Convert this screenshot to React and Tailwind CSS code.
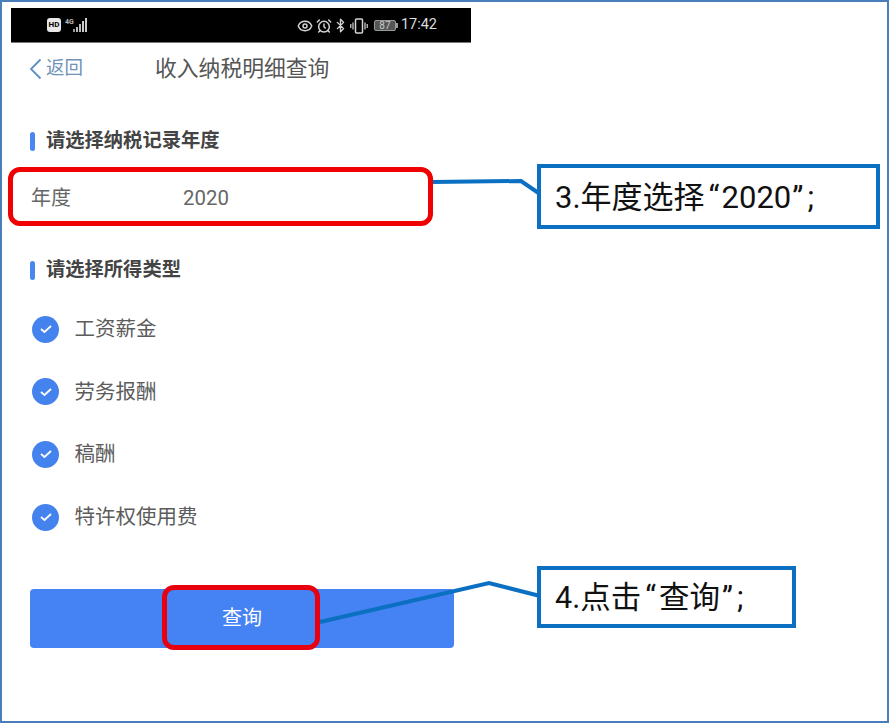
import { AlarmClock, Bluetooth, Eye } from "lucide-react";

const incomeTypes = ["工资薪金", "劳务报酬", "稿酬", "特许权使用费"];

const StatusBar = () => (
  <div className="ml-[9px] mt-[6px] flex h-[35px] w-[460px] items-center justify-between border-b border-[#777] bg-black pl-[36px] pr-[34px]">
    <div className="flex items-center gap-[3px]">
      <span className="flex h-[14px] w-[14px] items-center justify-center rounded-[3px] bg-[#e8e8e8] text-[8px] font-bold leading-none text-black">
        HD
      </span>
      <svg width="24" height="15" viewBox="0 0 24 15">
        <text x="1" y="6" fill="#bbb" fontSize="7" fontWeight="700" fontFamily="Roboto">4G</text>
        <rect x="9" y="11" width="2" height="3" fill="#999" />
        <rect x="12" y="9" width="2" height="5" fill="#bbb" />
        <rect x="15" y="6" width="2" height="8" fill="#bbb" />
        <rect x="18" y="3" width="2" height="11" fill="#ccc" />
        <rect x="21" y="0" width="2" height="14" fill="#ccc" />
      </svg>
    </div>
    <div className="flex items-center pt-[1px] text-[#d4d4d4]">
      <Eye size={16} strokeWidth={2.2} />
      <AlarmClock size={16} strokeWidth={2.2} className="ml-[3px]" />
      <Bluetooth size={15} strokeWidth={2.2} className="ml-[1px]" />
      <svg width="18" height="16" viewBox="0 0 18 16" fill="none" stroke="currentColor" className="ml-[2px]">
        <rect x="5.5" y="1" width="7" height="14" rx="1" strokeWidth="1.5" />
        <path d="M3 4.5 V11.5 M0.8 6 V10 M15 4.5 V11.5 M17.2 6 V10" strokeWidth="1.2" />
      </svg>
      <span className="ml-[6px] flex items-center">
        <span className="flex h-[11px] w-[22px] items-center justify-center rounded-[2px] border border-[#999] bg-[#555] font-['Roboto',sans-serif] text-[10px] leading-none text-[#ccc]">
          87
        </span>
        <span className="h-[5px] w-[2px] bg-[#999]" />
      </span>
      <span className="ml-[3px] font-['Roboto',sans-serif] text-[14.5px] leading-none text-[#ddd]">17:42</span>
    </div>
  </div>
);

const NavBar = () => (
  <div className="flex h-[52px] items-center pl-[26px]">
    <svg width="16" height="22" viewBox="0 0 16 22" fill="none" className="shrink-0">
      <path d="M12.5 1.5 L3 11 L12.5 20.5" stroke="#5f8fc4" strokeWidth="1.8" />
    </svg>
    <span className="ml-[2px] w-[109px] text-[18.5px] text-[#6f93b8]">返回</span>
    <span className="text-[21.8px] text-[#555]">收入纳税明细查询</span>
  </div>
);

const SectionTitle = ({ children, className }) => (
  <div className={`flex items-center pl-[28px] ${className}`}>
    <span className="h-[19px] w-[5px] rounded-full bg-[#4a86f0]" />
    <span className="ml-[11px] text-[19.3px] font-bold leading-[24px] text-[#444]">{children}</span>
  </div>
);

const CheckItem = ({ label }) => (
  <div className="flex h-[62.6px] items-center pl-[30px]">
    <span className="flex h-[27px] w-[27px] items-center justify-center rounded-full bg-[#4483ee]">
      <svg width="14" height="10" viewBox="0 0 14 10" fill="none">
        <path d="M2 5 L5.5 8 L12 2" stroke="white" strokeWidth="1.8" />
      </svg>
    </span>
    <span className="ml-[15.5px] text-[20.5px] text-[#5c5c5c]">{label}</span>
  </div>
);

const Callout = ({ className, children }) => (
  <div className={`absolute flex items-center border-[4px] border-[#0b70c1] bg-white pl-[14px] pt-[2px] leading-none text-[#111] ${className}`}>
    {children}
  </div>
);

export default function App() {
  return (
    <div className="relative h-[723px] w-[889px] overflow-hidden border-2 border-[#4a7ebb] bg-white font-['Roboto','Noto_Sans_CJK_SC',sans-serif]">
      <StatusBar />
      <NavBar />

      <SectionTitle className="mt-[34px]">请选择纳税记录年度</SectionTitle>

      <div className="mt-[22px] flex h-[46px] items-center pl-[29px] text-[#666]">
        <span className="w-[152px] text-[20px]">年度</span>
        <span className="text-[20.4px]">2020</span>
      </div>

      <SectionTitle className="mt-[37px]">请选择所得类型</SectionTitle>

      <div className="mt-[16px]">
        {incomeTypes.map((item) => (
          <CheckItem key={item} label={item} />
        ))}
      </div>

      <button className="ml-[28px] mt-[41px] flex h-[59px] w-[424px] items-center justify-center rounded-[4px] bg-[#4582f3] pb-[1px] text-[20px] text-white">
        查询
      </button>

      {/* annotations over the screenshot */}
      <svg className="absolute left-[-2px] top-[-2px]" width="889" height="723" fill="none">
        <path d="M432 182 L521 181 L540 194" stroke="#0b70c1" strokeWidth="4" />
        <path d="M320 622 L489 583 L540 596" stroke="#0b70c1" strokeWidth="4" />
      </svg>
      <div className="absolute left-[6px] top-[165px] h-[59px] w-[425px] rounded-[12px] border-[5px] border-[#f00000]" />
      <div className="absolute left-[160px] top-[583px] h-[65px] w-[158px] rounded-[12px] border-[5px] border-[#e8000f]" />
      <Callout className="left-[535px] top-[162px] h-[65px] w-[343px] text-[31px]">
        3.年度选择<span className="ml-[4px] mr-[2px]">“</span>2020<span className="ml-[1px]">”</span>
        <span className="ml-[4px]">;</span>
      </Callout>
      <Callout className="left-[535px] top-[564px] h-[62px] w-[259px] text-[30.5px]">
        4.点击<span className="ml-[4px] mr-[3px]">“</span>查询<span className="ml-[2px]">”</span>
        <span className="ml-[4px]">;</span>
      </Callout>
    </div>
  );
}
